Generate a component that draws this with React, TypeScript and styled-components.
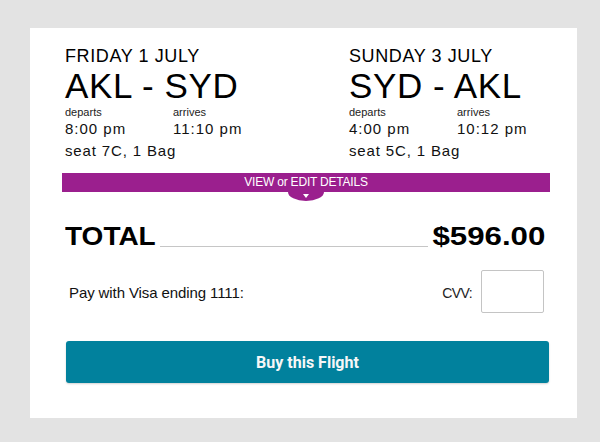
import React from "react";
import styled, { createGlobalStyle } from "styled-components";

const GlobalStyle = createGlobalStyle`
  html, body {
    margin: 0;
    padding: 0;
    background: #e3e3e3;
  }
  body {
    font-family: "Liberation Sans", Arial, sans-serif;
    color: #111;
  }
  * { box-sizing: border-box; }
`;

const Page = styled.div`
  padding: 28px 23px 24px 30px;
`;

const Card = styled.div`
  width: 547px;
  background: #fff;
  padding: 18px 27px 35px 32px;
  display: flex;
  flex-direction: column;
`;

const Trips = styled.div`
  display: flex;
  padding-left: 3px;
`;

const Trip = styled.div<{ $first?: boolean }>`
  flex: ${(p) => (p.$first ? "0 0 284px" : "1 1 auto")};
  display: flex;
  flex-direction: column;
`;

const DateLine = styled.div`
  font-size: 18px;
  line-height: 20px;
  letter-spacing: 0.6px;
  color: #000;
`;

const Route = styled.div`
  margin-top: 1px;
  font-size: 35px;
  line-height: 38px;
  letter-spacing: 0.6px;
  color: #000;
`;

const Times = styled.div`
  margin-top: 1px;
  display: grid;
  grid-template-columns: 108px auto;
`;

const TimeCol = styled.div`
  display: flex;
  flex-direction: column;
`;

const Label = styled.div`
  font-size: 11px;
  line-height: 12px;
  color: #222;
`;

const Time = styled.div`
  margin-top: 2px;
  font-size: 15px;
  line-height: 18px;
  letter-spacing: 1px;
  color: #111;
`;

const Seat = styled.div`
  margin-top: 4px;
  font-size: 15px;
  line-height: 18px;
  letter-spacing: 0.85px;
  color: #111;
`;

const DetailsBar = styled.div`
  position: relative;
  margin-top: 13px;
  height: 19px;
  background: #9b1f8e;
  color: #fff;
  font-size: 12px;
  line-height: 19px;
  letter-spacing: -0.2px;
  text-align: center;
  cursor: pointer;
`;

const Bump = styled.div`
  position: absolute;
  top: 100%;
  left: 50%;
  transform: translateX(-50%);
  width: 36px;
  height: 9px;
  background: #9b1f8e;
  border-radius: 0 0 18px 18px / 0 0 9px 9px;
  display: flex;
  justify-content: center;
  padding-top: 2px;
`;

const Arrow = styled.div`
  width: 0;
  height: 0;
  border-left: 3.5px solid transparent;
  border-right: 3.5px solid transparent;
  border-top: 4px solid #fff;
`;

const TotalRow = styled.div`
  margin-top: 29px;
  display: flex;
  align-items: flex-end;
  padding-left: 3px;
  padding-right: 5px;
`;

const TotalLabel = styled.div`
  font-size: 25px;
  line-height: 30px;
  font-weight: 700;
  color: #000;
  transform: scaleX(1.12);
  transform-origin: left center;
  margin-right: 10px;
`;

const Leader = styled.div`
  flex: 1;
  height: 1px;
  margin: 0 4px 4px 4px;
  background: #c6c6c6;
`;

const Price = styled.div`
  font-size: 25px;
  line-height: 30px;
  font-weight: 700;
  color: #000;
  transform: scaleX(1.25);
  transform-origin: right center;
  margin-left: 23px;
`;

const PayRow = styled.div`
  margin-top: 19px;
  display: flex;
  align-items: center;
  padding-left: 7px;
  padding-right: 6px;
`;

const PayText = styled.div`
  flex: 1;
  font-size: 15px;
  line-height: 18px;
  letter-spacing: -0.1px;
  color: #111;
  margin-top: 3px;
`;

const CvvLabel = styled.label`
  font-size: 14px;
  line-height: 18px;
  letter-spacing: -0.6px;
  color: #222;
  margin-right: 9px;
  margin-top: 3px;
`;

const CvvInput = styled.input`
  width: 63px;
  height: 43px;
  border: 1px solid #c4c4c4;
  border-radius: 2px;
  background: #fff;
  outline: none;
  padding: 0 6px;
  font-size: 15px;
`;

const BuyButton = styled.button`
  margin: 28px 1px 0 4px;
  height: 42px;
  border: none;
  border-radius: 3px;
  background: #01819d;
  color: #f7f7f7;
  font-family: Roboto, "Liberation Sans", sans-serif;
  font-weight: 700;
  font-size: 16px;
  box-shadow: 0 1px 2px rgba(0, 0, 0, 0.18);
  cursor: pointer;
`;

type TripData = {
  date: string;
  route: string;
  departs: string;
  arrives: string;
  seat: string;
};

const trips: TripData[] = [
  { date: "FRIDAY 1 JULY", route: "AKL - SYD", departs: "8:00 pm", arrives: "11:10 pm", seat: "seat 7C, 1 Bag" },
  { date: "SUNDAY 3 JULY", route: "SYD - AKL", departs: "4:00 pm", arrives: "10:12 pm", seat: "seat 5C, 1 Bag" },
];

export default function App() {
  return (
    <>
      <GlobalStyle />
      <Page>
        <Card>
          <Trips>
            {trips.map((t, i) => (
              <Trip key={t.route} $first={i === 0}>
                <DateLine>{t.date}</DateLine>
                <Route>{t.route}</Route>
                <Times>
                  <TimeCol>
                    <Label>departs</Label>
                    <Time>{t.departs}</Time>
                  </TimeCol>
                  <TimeCol>
                    <Label>arrives</Label>
                    <Time>{t.arrives}</Time>
                  </TimeCol>
                </Times>
                <Seat>{t.seat}</Seat>
              </Trip>
            ))}
          </Trips>
          <DetailsBar>
            VIEW or EDIT DETAILS
            <Bump>
              <Arrow />
            </Bump>
          </DetailsBar>
          <TotalRow>
            <TotalLabel>TOTAL</TotalLabel>
            <Leader />
            <Price>$596.00</Price>
          </TotalRow>
          <PayRow>
            <PayText>Pay with Visa ending 1111:</PayText>
            <CvvLabel htmlFor="cvv">CVV:</CvvLabel>
            <CvvInput id="cvv" type="text" />
          </PayRow>
          <BuyButton>Buy this Flight</BuyButton>
        </Card>
      </Page>
    </>
  );
}
